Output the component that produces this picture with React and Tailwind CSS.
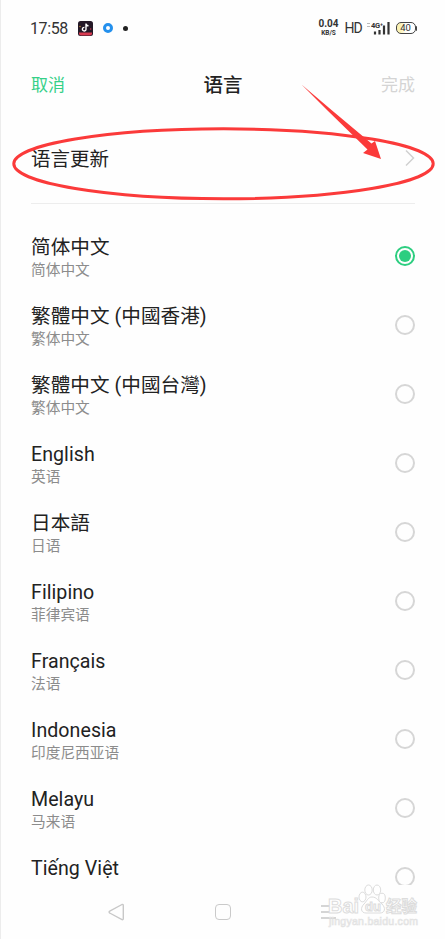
const LANGUAGES = [
  { title: "简体中文", sub: "简体中文", selected: true },
  { title: "繁體中文 (中國香港)", sub: "繁体中文" },
  { title: "繁體中文 (中國台灣)", sub: "繁体中文" },
  { title: "English", sub: "英语" },
  { title: "日本語", sub: "日语" },
  { title: "Filipino", sub: "菲律宾语" },
  { title: "Français", sub: "法语" },
  { title: "Indonesia", sub: "印度尼西亚语" },
  { title: "Melayu", sub: "马来语" },
  { title: "Tiếng Việt" },
];

function StatusBar() {
  return (
    <div className="flex h-14 shrink-0 items-center justify-between pl-[29px] pr-7">
      <div className="flex items-center">
        <span className="w-[48px] whitespace-nowrap pt-px text-[16px] leading-none tracking-[-0.4px] text-[#333]">17:58</span>
        <svg className="h-[15px] w-[15px]" viewBox="0 0 15 15">
          <rect width="15" height="15" rx="2.5" fill="#241827" />
          <path d="M1 11.5h13v1a2 2 0 0 1-2 2H3a2 2 0 0 1-2-2z" fill="#d83a50" />
          <path d="M8 2.5v5.7a1.8 1.8 0 1 1-1.6-1.8M8 2.5c.2 1.4 1.1 2.1 2.5 2.2" fill="none" stroke="#fff" strokeWidth="1.4" />
          <circle cx="2" cy="5.5" r=".7" fill="#d99a3a" />
          <circle cx="12.7" cy="8" r=".7" fill="#d83a50" />
        </svg>
        <span className="ml-[10px] h-[10px] w-[10px] rounded-full border-[3px] border-[#2490ed] bg-white" />
        <span className="ml-[10px] h-[5px] w-[5px] rounded-full bg-[#222]" />
      </div>
      <div className="flex items-center text-[#333]">
        <div className="flex w-[22px] flex-col items-center font-bold">
          <span className="text-[10px] leading-[10px]">0.04</span>
          <span className="text-[6.5px] leading-[8px]">KB/S</span>
        </div>
        <span className="ml-[5px] w-[17px] text-[14px] leading-none tracking-[-1px]">HD</span>
        <svg className="ml-[5px] h-[14px] w-[24px]" viewBox="0 0 24 14">
          <path d="M0 2.5h3M0 5.5h3" stroke="#bbb" strokeWidth="1.2" />
          <text x="4" y="6.5" fontSize="7.5" fontWeight="700" fill="#333" textLength="12">4G⁺</text>
          <path d="M8 13.5v-3M12.5 13.5V9M17 13.5V4.5M21.5 13.5V1" stroke="#333" strokeWidth="2.2" />
        </svg>
        <div className="ml-[5px] flex items-center">
          <div className="flex h-[12px] w-5 items-center justify-center rounded-[5px] border-[1.5px] border-[#444] bg-gradient-to-r from-[#fbf2b4] from-20% to-white to-50%">
            <span className="text-[9.5px] leading-none">40</span>
          </div>
          <span className="h-[5px] w-[1.5px] rounded-r bg-[#444]" />
        </div>
      </div>
    </div>
  );
}

function Radio({ selected }) {
  if (selected) {
    return (
      <span className="flex h-5 w-5 items-center justify-center rounded-full border-2 border-[#2dce80]">
        <span className="h-3 w-3 rounded-full bg-[#2dce80]" />
      </span>
    );
  }
  return <span className="h-5 w-5 rounded-full border-2 border-[#d6d6d6]" />;
}

function LanguageRow({ item }) {
  return (
    <div className="flex h-[69.1px] shrink-0 items-center justify-between">
      <div className="flex h-[52px] flex-col pt-[5px]">
        <span className="whitespace-nowrap text-[19.6px] leading-[26px] tracking-[0.05px] text-[#222]">{item.title}</span>
        {item.sub && <span className="whitespace-nowrap text-[14.7px] leading-[19px] text-[#8c8c8c]">{item.sub}</span>}
      </div>
      <Radio selected={item.selected} />
    </div>
  );
}

function Watermark() {
  return (
    <svg className="absolute left-[324px] top-[882px] h-[48px] w-[98px]" viewBox="0 0 98 48">
      <g fill="#fff" stroke="#dcdcdc" strokeWidth="1">
        <text x="3" y="31" fontSize="21" fontWeight="700" fontFamily="Liberation Sans, sans-serif" textLength="31" lengthAdjust="spacingAndGlyphs">Bai</text>
        <ellipse cx="37.5" cy="15" rx="3.5" ry="4.8" />
        <ellipse cx="43.5" cy="8" rx="3.7" ry="5" />
        <ellipse cx="52" cy="8" rx="3.7" ry="5" />
        <ellipse cx="57" cy="16" rx="3.3" ry="4.8" />
        <path d="M47 15c-4 0-5 4-8 7-4 4-3 9 2 9h14c5 0 6-5 2-9-4-3-5-7-10-7z" />
        <text x="40" y="29" fontSize="13" fontWeight="700" fontFamily="Liberation Sans, sans-serif">du</text>
        <text x="61" y="30" fontSize="15.5" fontWeight="700">经验</text>
      </g>
      <text x="4" y="43" fontSize="10.5" fill="#fff" stroke="#e2e2e2" strokeWidth=".7" fontFamily="Liberation Sans, sans-serif" textLength="89">jingyan.baidu.com</text>
    </svg>
  );
}

function NavBar() {
  return (
    <div className="grid h-[54px] shrink-0 grid-cols-3 items-center px-[62px] text-[#c8c8c8]">
      <svg className="ml-[45px] h-[18px] w-[17px]" viewBox="0 0 17 18" fill="none" stroke="currentColor" strokeWidth="1.4">
        <path d="M14 1.5 1.7 8.2a1 1 0 0 0 0 1.8L14 16.6q1.3.4 1.3-1V2.5q0-1.4-1.3-1z" />
      </svg>
      <span className="h-4 w-4 justify-self-center rounded-[4px] border-[1.5px] border-[#cacaca]" />
      <svg className="ml-[45px] h-[16px] w-[15px]" viewBox="0 0 15 16" stroke="currentColor" strokeWidth="1.3">
        <path d="M0 2h15M0 8h15M0 14h15" />
      </svg>
    </div>
  );
}

export default function App() {
  return (
    <div className="relative flex h-[939px] w-[445px] flex-col overflow-hidden border-l border-[#ececec] bg-[#fefefe] font-[Roboto,'Noto_Sans_CJK_SC',sans-serif]">
      <StatusBar />
      <header className="grid h-14 shrink-0 grid-cols-3 items-center px-[30px] pt-[3px] text-[17px]">
        <span className="text-[#35d088]">取消</span>
        <h1 className="text-center text-[19.5px] font-medium text-[#222]">语言</h1>
        <span className="text-right text-[#d4d4d4]">完成</span>
      </header>
      <div className="mx-[30px] flex h-[92px] shrink-0 items-center justify-between border-b border-[#ededed]">
        <span className="pt-[5px] text-[19.5px] leading-[26px] text-[#222]">语言更新</span>
        <svg className="h-[18px] w-[10px]" viewBox="0 0 10 18" fill="none" stroke="#d0d0d0" strokeWidth="1.5">
          <path d="m1 1.5 7.5 7.5L1 16.5" />
        </svg>
      </div>
      <div className="flex h-[681px] shrink-0 flex-col overflow-hidden px-[30px] pt-[17px]">
        {LANGUAGES.map((item) => (
          <LanguageRow key={item.title} item={item} />
        ))}
      </div>
      <NavBar />
      <Watermark />
      {/* hand-drawn pointer over the update row */}
      <svg className="pointer-events-none absolute -left-px top-0 h-[220px] w-[445px]" viewBox="0 0 445 220">
        <ellipse cx="223.5" cy="163.8" rx="209.7" ry="35" fill="none" stroke="#fb3a3a" strokeWidth="3" />
        <path d="M301.5 84.5 331.5 110 371.5 143.5l3.5-2.5 6 18-18-6 4.500-3.500L327 110z" fill="#fb3a3a" />
      </svg>
    </div>
  );
}
